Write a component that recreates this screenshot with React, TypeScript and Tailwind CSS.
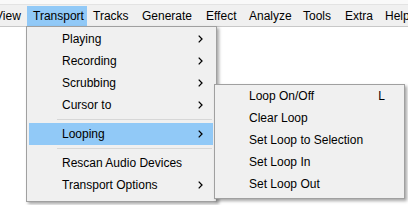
import React from "react";

type BarItem = { label: string; box: string; active?: boolean };

const barItems: BarItem[] = [
  { label: "View", box: "w-[38px] -ml-[11px]" },
  { label: "Transport", box: "w-[60px]", active: true },
  { label: "Tracks", box: "w-[49px]" },
  { label: "Generate", box: "w-[64px]" },
  { label: "Effect", box: "w-[43px]" },
  { label: "Analyze", box: "w-[54px]" },
  { label: "Tools", box: "w-[42px]" },
  { label: "Extra", box: "w-[40px]" },
  { label: "Help", box: "w-[40px]" },
];

type MenuItem = { label: string; arrow?: boolean; active?: boolean; sepBefore?: boolean };

const transportItems: MenuItem[] = [
  { label: "Playing", arrow: true },
  { label: "Recording", arrow: true },
  { label: "Scrubbing", arrow: true },
  { label: "Cursor to", arrow: true },
  { label: "Looping", arrow: true, active: true, sepBefore: true },
  { label: "Rescan Audio Devices", sepBefore: true },
  { label: "Transport Options", arrow: true },
];

const loopItems = [
  { label: "Loop On/Off", key: "L" },
  { label: "Clear Loop" },
  { label: "Set Loop to Selection" },
  { label: "Set Loop In" },
  { label: "Set Loop Out" },
];

function Chevron() {
  return (
    <svg width="5" height="8" viewBox="0 0 5 8" className="block">
      <path d="M0.7 0.6 L4 4 L0.7 7.4" fill="none" stroke="#000" strokeWidth="1.3" />
    </svg>
  );
}

function Separator() {
  return (
    <div className="flex h-[7px] items-center">
      <div className="ml-[30px] mr-[4px] h-px flex-1 bg-[#d7d7d7]" />
    </div>
  );
}

export default function App() {
  return (
    <div className="relative h-[205px] w-[408px] overflow-hidden bg-white font-['Liberation_Sans',Arial,sans-serif] text-[12px] text-black">
      {/* window chrome above the menubar */}
      <div className="h-[4px] bg-[#f9f9f9]" />
      <div className="h-px bg-[#e3e3e3]" />

      {/* menubar */}
      <div className="flex h-[21px] bg-[#f0f0f0] pt-px">
        {barItems.map((item) => (
          <div
            key={item.label}
            className={`flex h-[20px] shrink-0 items-center whitespace-nowrap pl-[6px] ${item.box} ${
              item.active ? "bg-[#91c9f7]" : ""
            }`}
          >
            {item.label}
          </div>
        ))}
      </div>
      <div className="h-px bg-[#c8c8c8]" />

      {/* Transport dropdown */}
      <div className="absolute left-[26px] top-[26px] w-[191px] border border-[#a0a0a0] bg-[#f0f0f0] pb-[5px] pt-px shadow-[2px_2px_3px_rgba(0,0,0,0.35)]">
        {transportItems.map((item) => (
          <React.Fragment key={item.label}>
            {item.sepBefore && <Separator />}
            <div
              className={`ml-[2px] mr-[3px] flex h-[22px] items-center justify-between pl-[33px] pr-[10px] ${
                item.active ? "bg-[#91c9f7]" : ""
              }`}
            >
              <span className="whitespace-nowrap">{item.label}</span>
              {item.arrow && <Chevron />}
            </div>
          </React.Fragment>
        ))}
      </div>

      {/* Looping submenu */}
      <div className="absolute left-[214px] top-[84px] w-[191px] border border-[#a0a0a0] bg-[#f0f0f0] pb-[3px] shadow-[2px_2px_3px_rgba(0,0,0,0.35)]">
        {loopItems.map((item) => (
          <div
            key={item.label}
            className="ml-[2px] mr-[3px] flex h-[22px] items-center justify-between pl-[32px] pr-[16px]"
          >
            <span className="whitespace-nowrap">{item.label}</span>
            {item.key && <span>{item.key}</span>}
          </div>
        ))}
      </div>
    </div>
  );
}
